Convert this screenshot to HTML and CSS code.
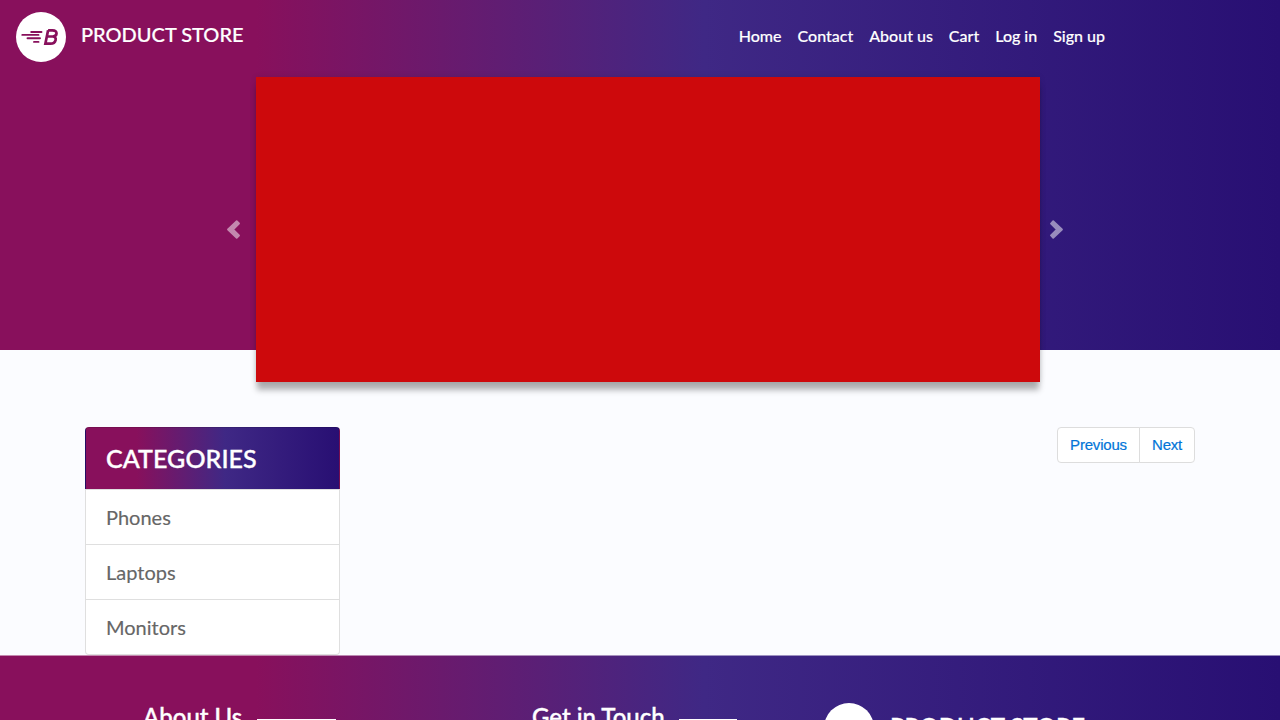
FILE: index.html
```html
<!DOCTYPE html>
<html lang="en">
<head>
<meta charset="utf-8">
<title>STORE</title>
<link rel="stylesheet" href="styles.css">
</head>
<body>
<header class="hero">
  <nav class="navbar">
    <a class="brand">
      <svg class="logo" viewBox="0 0 50 50"><circle cx="25" cy="25" r="25" fill="#fff"/><g fill="none" stroke="#88105c" stroke-width="1.9" stroke-linecap="round"><path d="M15.2 20H25.5M6.3 22.9H22.5M11.5 26.3H24M18 29.9H22.500"/><path d="M32.1 18.3H36.5C42.2 18.3 41.5 24.5 36.6 24.5H31M36.6 24.5C41.7 24.5 40.2 31.6 34.5 31.6H29.4L32.1 18.3" stroke-width="2.7" stroke-linecap="butt"/></g></svg>
      <span class="brand-name">PRODUCT STORE</span>
    </a>
    <div class="links"><a>Home</a><a>Contact</a><a>About us</a><a>Cart</a><a>Log in</a><a>Sign up</a></div>
  </nav>
  <div class="carousel">
    <svg class="arrow" viewBox="0 0 20 20"><path d="M10.700 1.200L2 9.500L10.700 17.800L13 15.500L7 9.500L13 3.500Z"/></svg>
    <div class="slide"></div>
    <svg class="arrow next" viewBox="0 0 20 20"><path d="M3.200 1.200L1 3.500L7 9.500L1 15.500L3.200 17.800L12 9.500Z"/></svg>
  </div>
</header>
<main class="content">
  <div class="categories">
    <a class="cat-title">CATEGORIES</a>
    <a>Phones</a>
    <a>Laptops</a>
    <a>Monitors</a>
  </div>
  <div class="pager"><button>Previous</button><button>Next</button></div>
</main>
<footer class="footer">
  <div class="foot-title about">About Us<span class="rule"></span></div>
  <div class="foot-title touch">Get in Touch<span class="rule"></span></div>
  <div class="foot-brand"><span class="disc"></span><span>PRODUCT STORE</span></div>
</footer>
</body>
</html>
```
FILE: styles.css
```css
* { box-sizing: border-box; }
html { overflow: hidden; }
body {
  display: flex;
  flex-direction: column;
  margin: 0;
  height: 720px;
  overflow: hidden;
  background: #fbfcff;
  font-family: Lato, sans-serif;
  line-height: 1.5;
}
.hero, .cat-title, .footer {
  background-image: linear-gradient(90deg, #88105c 20%, #3f2885 55%, #280f73 100%);
}
.hero { flex: none; height: 350px; }
.navbar {
  display: flex;
  justify-content: space-between;
  height: 77px;
  padding: 12px 175px 0 16px;
}
.brand { display: flex; color: #fff; }
.logo { width: 50px; height: 50px; margin-right: 15px; }
.brand-name {
  font-size: 20px;
  font-weight: 500;
  line-height: 30px;
  padding-top: 7px;
  -webkit-text-stroke: .2px;
}
.links {
  display: flex;
  gap: 16px;
  padding-top: 12px;
  color: #fff;
  font-size: 16px;
  font-weight: 500;
  -webkit-text-stroke: .15px;
}
.carousel { display: flex; align-items: center; padding-left: 226px; }
.slide {
  width: 784px;
  height: 305px;
  background: #cd090c;
  box-shadow: 0 9px 6px -1px rgba(0, 0, 0, .3), 0 0 6px rgba(0, 0, 0, .1);
}
.arrow {
  width: 20px;
  height: 20px;
  margin-right: 10px;
  fill: #fff;
  stroke: #fff;
  stroke-width: 1.800;
  stroke-linejoin: round;
  opacity: .5;
}
.next { margin: 0 0 0 10px; }
.content {
  display: flex;
  flex: none;
  justify-content: space-between;
  align-items: flex-start;
  margin: 77px 85px 0;
  height: 228px;
}
.categories { width: 255px; font-size: 20px; color: #666; -webkit-text-stroke: .15px; }
.categories a {
  display: block;
  height: 56px;
  margin-bottom: -1px;
  padding: 12px 20px;
  background-color: #fff;
  border: 1px solid rgba(0, 0, 0, .125);
}
.categories a:last-child { border-radius: 0 0 4px 4px; }
.categories .cat-title {
  height: 63px;
  font-size: 25px;
  font-weight: 500;
  letter-spacing: .08px;
  color: #fff;
  border-radius: 4px 4px 0 0;
  -webkit-text-stroke: .4px;
}
.pager { display: flex; }
.pager button {
  height: 36px;
  padding: 0 12px 2px;
  background: #fff;
  border: 1px solid #ddd;
  color: #0275d8;
  font: 15px "Liberation Sans", Arial, sans-serif;
  letter-spacing: -.2px;
  -webkit-text-stroke: .2px;
}
.pager button:first-child { width: 83px; border-radius: 4px 0 0 4px; }
.pager button:last-child { width: 56px; border-radius: 0 4px 4px 0; margin-left: -1px; }
.footer {
  display: flex;
  flex: 1;
  min-height: 0;
  align-items: flex-start;
  padding: 42px 0 0 143px;
  border-top: 1px solid rgba(255, 255, 255, .5);
  background-origin: border-box;
  color: #fff;
  font-size: 24px;
  font-weight: 500;
  -webkit-text-stroke: .4px;
}
.foot-title { display: flex; gap: 15px; line-height: 38px; }
.about { width: 389px; }
.touch { width: 292px; }
.rule { width: 79px; height: 2px; margin-top: 20.500px; background: #fff; }
.touch .rule { width: 58px; margin-left: -1px; }
.foot-brand { display: flex; gap: 16px; padding-top: 5.400px; }
.foot-brand span:last-child { line-height: 36px; padding-top: 6px; }
.disc { width: 50px; height: 50px; border-radius: 50%; background: #fff; }
```
